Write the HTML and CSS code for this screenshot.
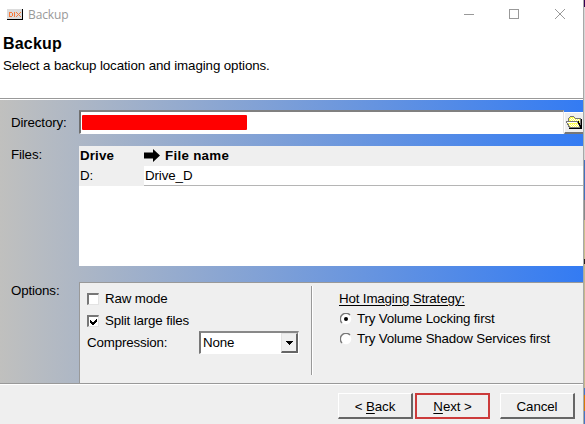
FILE: index.html
```html
<!DOCTYPE html>
<html lang="en">
<head>
<meta charset="utf-8">
<title>Backup</title>
<link rel="stylesheet" href="styles.css">
</head>
<body>
<div class="screen">
<main class="window">
  <div class="titlebar">
    <span class="app-icon"><svg width="16" height="11" viewBox="0 0 16 11" shape-rendering="crispEdges"><path fill="#dcdcdc" d="M0 0h16v11H0z"/><path fill="#000" d="M15 0h1v11H0v-1h15z"/><path fill="#f87a3c" d="M2 3h3v1H3v3h2v1H2zM5 4h1v3H5zM7 3h1v5H7zM9 3h1v1H9zM10 4h1v1h-1zM11 5h1v1h-1zM10 6h1v1h-1zM9 7h1v1H9zM13 3h1v1h-1zM12 4h1v1h-1zM12 6h1v1h-1zM13 7h1v1h-1z"/></svg></span>
    <span class="caption">Backup</span>
    <svg class="controls" width="112" height="12" viewBox="0 0 112 12" fill="none" stroke="#999"><path d="M0 6.500h10M45.500 1.500h9v9h-9z" shape-rendering="crispEdges"/><path d="M91 1l10 10M101 1L91 11"/></svg>
  </div>
  <header class="intro">
    <h1>Backup</h1>
    <p>Select a backup location and imaging options.</p>
  </header>
  <section class="form">
    <div class="row directory">
      <label>Directory:</label>
      <div class="path"><span class="redacted"></span></div>
      <button class="browse" aria-label="Browse"><svg width="16" height="13" viewBox="0 0 16 13" shape-rendering="crispEdges"><path fill="#000" d="M3 12h12V3h1v10H3z"/><path fill="#ffff50" stroke="#777" d="M2.500 5.500v-3l2-2h3l2 2h5v9h-11z"/><path fill="#ffff50" stroke="#777" d="M.5 5.500h11l3 6h-11z"/><path fill="#fff" d="M1 6h10v1H1z"/><path fill="none" stroke="#fff" stroke-dasharray="1 1" d="M5 2.500h4M4 3.500h10M5 4.500h9M3 8.500h9M4 9.500h9M5 10.500h8"/><path fill="#000" d="M12 5h1v2h1v2h1v3h-1v-2h-1V8h-1z"/></svg></button>
    </div>
    <div class="row files">
      <label>Files:</label>
      <div class="list">
        <div class="list-row head"><span class="drive">Drive</span><svg width="17" height="13" viewBox="0 0 17 13"><path d="M0 3.500h9V0l7 6.500L9 13V9.500H0z"/></svg><span class="file-head">File name</span></div>
        <div class="list-row"><span class="drive">D:</span><span class="file">Drive_D</span></div>
      </div>
    </div>
    <div class="row options">
      <label>Options:</label>
      <div class="panel">
        <div class="left">
          <div class="check"><span class="box"></span><span>Raw mode</span></div>
          <div class="check"><span class="box"><svg width="9" height="9" viewBox="0 0 9 9" shape-rendering="crispEdges"><path d="M1 3v3l2 2h1l4-4V1L4 5H3z"/></svg></span><span>Split large files</span></div>
          <div class="compression"><span>Compression:</span><div class="select"><span>None</span><b><svg width="7" height="4" viewBox="0 0 7 4" shape-rendering="crispEdges"><path d="M0 0h7v1H6v1H5v1H4v1H3V3H2V2H1V1H0z"/></svg></b></div></div>
        </div>
        <div class="divider"></div>
        <div class="right">
          <div class="strategy">Hot Imaging Strategy:</div>
          <div class="choice"><svg width="12" height="12" viewBox="0 0 12 12"><circle cx="6" cy="6" r="5.300" fill="#fff"/><path d="M2 10A5.500 5.500 0 0 1 10 2" fill="none" stroke="#777" stroke-width="1.400"/><circle cx="6" cy="6" r="2"/></svg><span>Try Volume Locking first</span></div>
          <div class="choice"><svg width="12" height="12" viewBox="0 0 12 12"><circle cx="6" cy="6" r="5.300" fill="#fff"/><path d="M2 10A5.500 5.500 0 0 1 10 2" fill="none" stroke="#777" stroke-width="1.400"/></svg><span>Try Volume Shadow Services first</span></div>
        </div>
      </div>
    </div>
  </section>
  <footer class="footer">
    <button>&lt; <u>B</u>ack</button>
    <button class="next"><u>N</u>ext &gt;</button>
    <button class="cancel">Cancel</button>
  </footer>
</main>
<aside class="desktop"><i class="purple"></i><i class="pale"></i><i class="blue"></i><i class="gray"></i><i class="tan"></i><i class="mark"></i><i class="tan2"></i><i class="blue2"></i><i class="orange"></i><i class="blue3"></i></aside>
</div>
</body>
</html>
```
FILE: styles.css
```css
* { box-sizing: border-box; }
body {
  margin: 0;
  width: 585px;
  height: 424px;
  overflow: hidden;
  font: 13.33px/20px "Liberation Sans", Arial, sans-serif;
  letter-spacing: -0.1px;
  color: #000;
}
svg { display: block; flex: none; }
.screen { display: flex; height: 424px; }
.window { width: 583px; height: 424px; background: #efefef; overflow: hidden; }
.titlebar { display: flex; height: 30px; background: #fff; padding-left: 7px; }
.app-icon { padding-top: 9px; }
.caption { font: 12px/30px "Open Sans", sans-serif; letter-spacing: -0.1px; color: #999; margin-left: 5px; width: 436px; }
.controls { margin-top: 8px; }
.intro {
  height: 70px;
  background: #fff;
  border-bottom: 1px solid #fff;
  box-shadow: inset 0 -1px #999;
  padding: 3px;
}
h1 { margin: 0; font-size: 16px; line-height: 21px; letter-spacing: 0.2px; }
p { margin: 2px 0 0; }
.form {
  height: 283px;
  padding-top: 10px;
  background: linear-gradient(90deg, #c0c0be, #337bf3);
}
.row { display: flex; }
label { width: 79px; padding-left: 11px; flex: none; letter-spacing: -0.15px; }
.directory { height: 36px; }
.directory label { padding-top: 3px; }
.path {
  width: 485px;
  height: 24px;
  background: #fff;
  border: 2px solid;
  border-color: #808080 #e3e3e3 #fff #707070;
  border-right-width: 1px;
  border-bottom-width: 1px;
  padding: 3px 1px;
}
.redacted { display: block; width: 165px; height: 15px; background: #f00; border-radius: 1px; }
.browse {
  display: flex;
  align-items: flex-start;
  justify-content: flex-start;
  width: 19px;
  height: 22px;
  margin: 2px 0 0;
  padding: 3px 0 0 1px;
  border: 1px solid #fff;
  border-width: 1px 0 2px 1px;
  border-bottom-color: #777;
  background: #efefef;
}
.files { height: 136px; }
.files label { line-height: 18px; }
.list { width: 504px; height: 120px; background: #fff; }
.list-row { display: flex; height: 20px; line-height: 19px; }
.head { background: #efefef; font-weight: bold; letter-spacing: 0.15px; line-height: 20px; }
.head svg { margin-top: 3px; }
.drive { width: 65px; padding-left: 1px; background: #efefef; }
.file-head { margin-left: 4px; letter-spacing: 0.3px; }
.file { flex: 1; padding-left: 1px; border-bottom: 1px solid #b5b5b5; }
.options label { line-height: 17px; }
.panel {
  display: flex;
  width: 504px;
  height: 101px;
  background: #efefef;
  border: 1px solid #999;
  border-width: 1px 0 0 1px;
  padding-top: 4px;
}
.left { width: 231px; padding: 0 0 0 7px; letter-spacing: -0.15px; }
.check { display: flex; height: 22px; align-items: center; gap: 6px; }
.check > span:last-child { line-height: 20px; }
.box {
  width: 12px;
  height: 12px;
  margin-top: -1px;
  background: #fff;
  border: 2px solid;
  border-color: #777 #e3e3e3 #e3e3e3 #777;
  border-right-width: 1px;
  border-bottom-width: 1px;
}
.compression { display: flex; padding-top: 1px; }
.compression > span { width: 112px; line-height: 20px; }
.select {
  display: flex;
  width: 100px;
  height: 23px;
  margin-top: -2px;
  background: #fff;
  border: 2px solid;
  border-color: #888 #fff #fff #777;
  border-right-width: 1px;
  border-bottom-width: 1px;
}
.select span { flex: 1; padding-left: 2px; line-height: 20px; }
.select b {
  width: 17px;
  background: #efefef;
  border: 1px solid;
  border-color: #e3e3e3 #666 #666 #e3e3e3;
  border-right-width: 2px;
  border-bottom-width: 2px;
  padding: 7px 0 0 4px;
}
.left .check:first-child { margin-top: 1px; }
.divider { width: 2px; height: 89px; border-left: 1px solid #999; border-right: 1px solid #fff; margin-top: -1px; }
.right { padding: 2px 0 0 26px; letter-spacing: -0.18px; }
.strategy { text-decoration: underline; text-underline-offset: 2px; letter-spacing: -0.15px; }
.choice { display: flex; height: 20px; align-items: center; gap: 5px; padding-left: 1px; }
.choice svg { margin-top: -1px; }
.footer {
  display: flex;
  justify-content: flex-end;
  height: 41px;
  border-top: 1px solid #999;
  box-shadow: inset 0 1px #fff;
  padding: 9px 8px 0 0;
}
.footer button {
  width: 75px;
  height: 26px;
  padding: 2px 0 0;
  font: inherit;
  letter-spacing: -0.1px;
  color: #000;
  background: #efefef;
  border: 1px solid;
  border-color: #fff #666 #666 #fff;
  border-right-width: 2px;
  border-bottom-width: 2px;
}
.footer .next { margin-left: 2px; padding-top: 1px; border-color: #cc3b3b; border-width: 2px; }
.footer .cancel { margin-left: 10px; }
u { text-underline-offset: 2px; }
.desktop { display: flex; flex-direction: column; width: 2px; height: 424px; border-left: 1px solid #a8a8a8; }
.purple { height: 7px; background: #360051; }
.pale { height: 153px; background: #d7d7d7; }
.blue { height: 40px; background: #4472bd; }
.gray { height: 20px; background: #898989; }
.tan { height: 39px; background: #cbbf8e; }
.mark { height: 5px; background: #281c1c; }
.tan2 { height: 124px; background: #c5b98c; }
.blue2 { height: 7px; background: #4775c6; }
.orange { height: 16px; background: #d77908; }
.blue3 { height: 13px; background: #4775c6; }
```
